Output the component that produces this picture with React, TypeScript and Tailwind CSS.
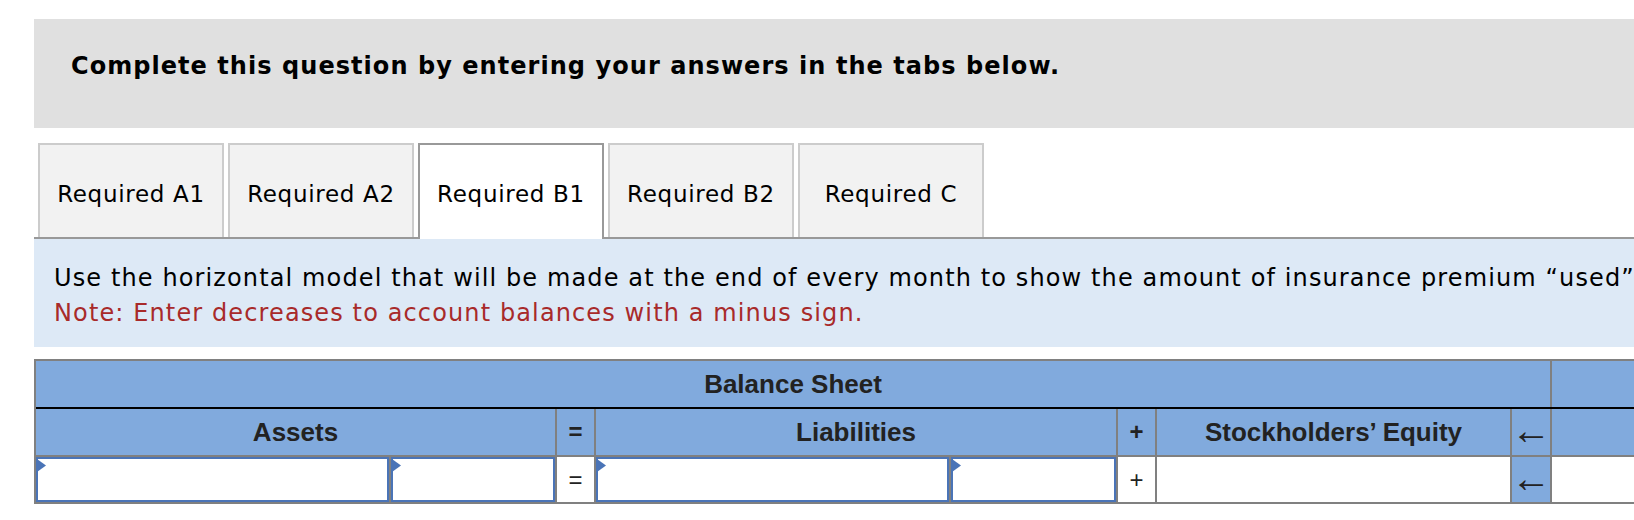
import * as React from 'react'

const tabs = ['Required A1', 'Required A2', 'Required B1', 'Required B2', 'Required C']

function Flag() {
  return (
    <svg
      className="absolute top-0 left-[-1px]"
      width="10"
      height="13"
      viewBox="0 0 10 13"
    >
      <path d="M0 0 L9 6.5 L0 13 Z" fill="#4a74b7" />
    </svg>
  )
}

function EntryCell() {
  return (
    <div className="relative bg-white border-2 border-[#4a74b7] h-[45px]">
      <Flag />
    </div>
  )
}

export default function App() {
  const [active, setActive] = React.useState(2)

  return (
    <div className="w-full h-[520px] overflow-hidden bg-white">
      <div className="w-[1700px] ml-[34px] pt-[19px]">
        {/* prompt */}
        <div className="h-[109px] bg-[#e0e0e0] pt-[32px] pl-[37px]">
          <h1 className="font-['DejaVu_Sans',sans-serif] font-bold text-[24px] tracking-[1.05px] leading-[30px] text-black">
            Complete this question by entering your answers in the tabs below.
          </h1>
        </div>

        {/* tabs */}
        <div className="mt-[15px] flex gap-[4px] pl-[4px] border-b-2 border-[#999999]">
          {tabs.map((t, i) => (
            <button
              key={t}
              onClick={() => setActive(i)}
              className={
                i === active
                  ? 'w-[186px] h-[96px] mb-[-2px] pt-[4px] bg-white border-2 border-b-0 border-[#999999] flex items-center justify-center font-["DejaVu_Sans",sans-serif] text-[23px] tracking-[0.7px] text-black'
                  : 'w-[186px] h-[94px] pt-[6px] bg-[#f2f2f2] border-2 border-b-0 border-[#cccccc] flex items-center justify-center font-["DejaVu_Sans",sans-serif] text-[23px] tracking-[0.7px] text-black'
              }
            >
              {t}
            </button>
          ))}
        </div>

        {/* instructions */}
        <div className="h-[108px] bg-[#dde9f6] pl-[20px] pt-[22px] font-['DejaVu_Sans',sans-serif] text-[24px] tracking-[1.12px] leading-[35px] whitespace-nowrap">
          <p className="text-black">
            Use the horizontal model that will be made at the end of every month to show the amount of insurance premium “used”
          </p>
          <p className="text-[#a82a2a]">Note: Enter decreases to account balances with a minus sign.</p>
        </div>

        {/* horizontal model */}
        <div className="mt-[12px] w-[1730px] border-2 border-[#808080] bg-[#808080] font-['Liberation_Sans',Arial,sans-serif] text-[#222222]">
          <div className="flex gap-[2px]">
            <div className="w-[1514px] h-[46px] bg-[#81aadd] flex items-center justify-center font-bold text-[26px]">
              Balance Sheet
            </div>
            <div className="flex-1 bg-[#81aadd]" />
          </div>
          <div className="h-[2px] bg-black" />
          <div className="grid grid-cols-[353px_164px_37px_353px_165px_37px_353px_38px_1fr] gap-[2px]">
            <div className="col-span-2 h-[46px] bg-[#81aadd] flex items-center justify-center font-bold text-[26px]">
              Assets
            </div>
            <div className="bg-[#81aadd] flex items-center justify-center font-bold text-[24px]">=</div>
            <div className="col-span-2 bg-[#81aadd] flex items-center justify-center font-bold text-[26px]">
              Liabilities
            </div>
            <div className="bg-[#81aadd] flex items-center justify-center font-bold text-[24px]">+</div>
            <div className="bg-[#81aadd] flex items-center justify-center font-bold text-[26px]">
              Stockholders’ Equity
            </div>
            <div className="bg-[#81aadd] flex items-center justify-center font-['Liberation_Serif',serif] text-[40px] leading-[34px] pb-[2px]">
              ←
            </div>
            <div className="bg-[#81aadd]" />

            <EntryCell />
            <EntryCell />
            <div className="bg-white flex items-center justify-center text-[24px]">=</div>
            <EntryCell />
            <EntryCell />
            <div className="bg-white flex items-center justify-center text-[24px]">+</div>
            <div className="bg-white" />
            <div className="bg-[#81aadd] flex items-center justify-center font-['Liberation_Serif',serif] text-[40px] leading-[34px] pb-[2px]">
              ←
            </div>
            <div className="bg-white" />
          </div>
        </div>
      </div>
    </div>
  )
}
